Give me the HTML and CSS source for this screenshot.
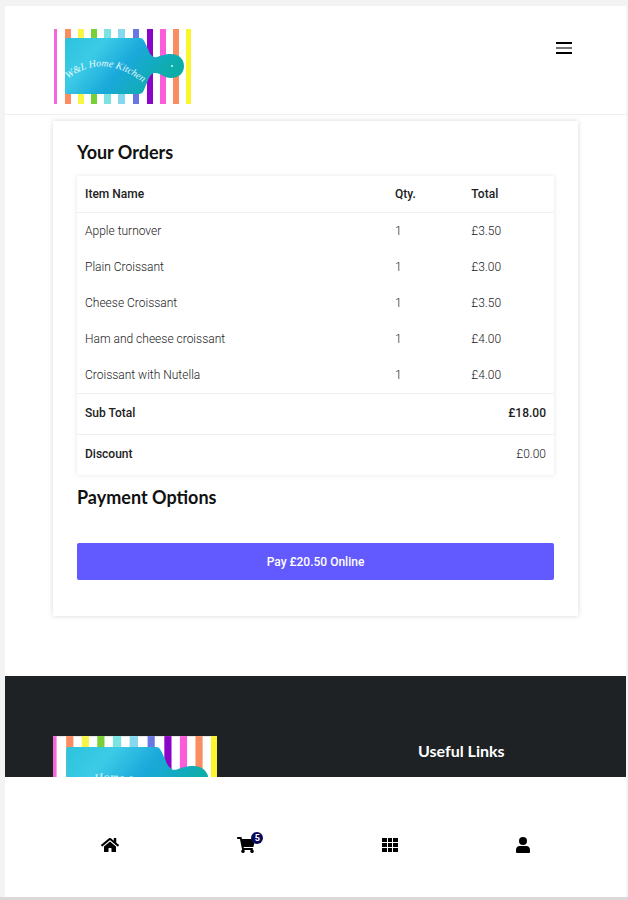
FILE: index.html
```html
<!DOCTYPE html>
<html lang="en">
<head>
    <meta charset="UTF-8">
    <meta name="viewport" content="width=device-width, initial-scale=1.0">
    <title>Your Orders</title>
    <link rel="stylesheet" href="styles.css">
</head>
<body>
    <!-- Shared logo artwork -->
    <svg class="sprite" aria-hidden="true">
        <defs>
            <linearGradient id="board-fill" x1="0" y1="0" x2="1" y2="0.4">
                <stop offset="0" stop-color="#2cc3dc"/>
                <stop offset="0.3" stop-color="#3ccbe6"/>
                <stop offset="0.6" stop-color="#1aa9da"/>
                <stop offset="1" stop-color="#0cada6"/>
            </linearGradient>
            <path id="logo-arc" d="M14 50 Q50 22 92 56"/>
        </defs>
        <symbol id="logo" viewBox="0 0 137 75">
            <rect width="137" height="75" fill="#fff"/>
            <rect x="0" width="3" height="75" fill="#f665dc"/>
            <rect x="11" width="6" height="75" fill="#f98c60"/>
            <rect x="24" width="6" height="75" fill="#f8f545"/>
            <rect x="37" width="6" height="75" fill="#79cf36"/>
            <rect x="50" width="7" height="75" fill="#7ce3e0"/>
            <rect x="64" width="7" height="75" fill="#85d8ee"/>
            <rect x="79" width="6" height="75" fill="#6877e4"/>
            <rect x="93" width="6" height="75" fill="#8a05c8"/>
            <rect x="106" width="6" height="75" fill="#fa5cda"/>
            <rect x="119" width="6" height="75" fill="#f98c60"/>
            <rect x="132" width="5" height="75" fill="#fbf52c"/>
            <path fill="url(#board-fill)" d="M13 9H86C90 9 91 14 94 20C96 26 99 29 103 28C107 27 110 25 117 25C125 25 130 30 130 37C130 44 125 49 117 49C110 49 107 44 101 44C96 44 95 50 92 56C90 61 89 65 85 65H13Q11 65 11 63V11Q11 9 13 9Z"/>
            <circle cx="118" cy="37" r="1" fill="#d9f7f4"/>
            <text class="logo-text"><textPath href="#logo-arc">W&amp;L Home Kitchen</textPath></text>
        </symbol>
    </svg>

    <div class="app">
        <header class="top-bar">
            <a href="#" class="brand" aria-label="Home">
                <svg class="logo"><use href="#logo"/></svg>
            </a>
            <button type="button" class="menu-button" aria-label="Menu">
                <svg width="16" height="12" viewBox="0 0 16 12">
                    <path d="M0 1H16M0 11H16" stroke="#000" stroke-width="2"/>
                    <path d="M0 6H16" stroke="#777" stroke-width="2"/>
                </svg>
            </button>
        </header>

        <div class="content">
            <main class="order-card">
                <h2>Your Orders</h2>
                <table class="order-table">
                    <thead>
                        <tr>
                            <th class="col-name">Item Name</th>
                            <th class="col-qty">Qty.</th>
                            <th class="col-total">Total</th>
                        </tr>
                    </thead>
                    <tbody>
                        <tr><td>Apple turnover</td><td>1</td><td>£3.50</td></tr>
                        <tr><td>Plain Croissant</td><td>1</td><td>£3.00</td></tr>
                        <tr><td>Cheese Croissant</td><td>1</td><td>£3.50</td></tr>
                        <tr><td>Ham and cheese croissant</td><td>1</td><td>£4.00</td></tr>
                        <tr><td>Croissant with Nutella</td><td>1</td><td>£4.00</td></tr>
                    </tbody>
                    <tfoot>
                        <tr><th>Sub Total</th><td colspan="2" class="amount strong">£18.00</td></tr>
                        <tr><th>Discount</th><td colspan="2" class="amount">£0.00</td></tr>
                    </tfoot>
                </table>
                <h2>Payment Options</h2>
                <button type="button" class="pay-button">Pay £20.50 Online</button>
            </main>

            <footer class="footer">
                <a href="#" class="footer-brand" aria-label="Home">
                    <svg class="logo logo-large"><use href="#logo"/></svg>
                </a>
                <h3>Useful Links</h3>
            </footer>
        </div>

        <nav class="bottom-nav">
            <a href="#" aria-label="Home">
                <svg width="18" height="16" viewBox="0 0 576 512"><path d="M280 148L96 300v164a16 16 0 0 0 16 16h112a16 16 0 0 0 16-16v-96a16 16 0 0 1 16-16h64a16 16 0 0 1 16 16v96a16 16 0 0 0 16 16h112a16 16 0 0 0 16-16V300L296 148a12 12 0 0 0-16 0zM571 251L488 183V44a12 12 0 0 0-12-12h-56a12 12 0 0 0-12 12v73L318 43a48 48 0 0 0-61 0L4 251a12 12 0 0 0-1 17l25 31a12 12 0 0 0 17 2L280 107a12 12 0 0 1 16 0l235 194a12 12 0 0 0 17-2l25-31a12 12 0 0 0-2-17z"/></svg>
            </a>
            <a href="#" class="cart" aria-label="Cart">
                <svg width="18" height="16" viewBox="0 0 576 512"><path d="M528 301l47-208a24 24 0 0 0-23-29H159l-9-45a24 24 0 0 0-24-19H24A24 24 0 0 0 0 24v16a24 24 0 0 0 24 24h70l70 343a56 56 0 1 0 67 9h210a56 56 0 1 0 64-10l5-25a24 24 0 0 0-23-29H218l-7-32h293a24 24 0 0 0 24-19z"/></svg>
                <span class="badge">5</span>
            </a>
            <a href="#" aria-label="Categories">
                <svg width="16" height="14" viewBox="0 0 16 14"><path d="M0 0h5v4H0zM6 0h4v4H6zM11 0h5v4h-5zM0 5h5v4H0zM6 5h4v4H6zM11 5h5v4h-5zM0 10h5v4H0zM6 10h4v4H6zM11 10h5v4h-5z"/></svg>
            </a>
            <a href="#" aria-label="Account">
                <svg width="14" height="16" viewBox="0 0 14 16"><circle cx="7" cy="4" r="4"/><path d="M4 9h6c3 0 4 2 4 4v2q0 1-1 1H1q-1 0-1-1v-2c0-2 1-4 4-4z"/></svg>
            </a>
        </nav>
    </div>
</body>
</html>
```

FILE: styles.css
```css
* {
    box-sizing: border-box;
}
body {
    margin: 0;
    font-family: Roboto, "Liberation Sans", sans-serif;
    font-size: 12px;
    line-height: 20px;
    color: #222;
    background-color: #f3f3f3;
}
h2, h3 {
    margin: 0;
    font-family: Lato, "Liberation Sans", sans-serif;
    font-weight: 700;
    color: #111;
}
h2 {
    font-size: 18px;
    line-height: 24px;
}
h3 {
    font-size: 16px;
    line-height: 20px;
    color: #fff;
}
.sprite {
    position: absolute;
    width: 0;
    height: 0;
}
.app {
    display: flex;
    flex-direction: column;
    height: 100vh;
    padding: 6px 2px 0 5px;
    border-bottom: 3px solid #d9d9d9;
}
.top-bar {
    display: flex;
    justify-content: space-between;
    align-items: flex-start;
    flex-shrink: 0;
    padding: 23px 49px 10px;
    background-color: #fff;
    border-bottom: 1px solid #f0f0f0;
}
.logo {
    display: block;
    width: 137px;
    height: 75px;
}
.logo-large {
    width: 164px;
    height: 90px;
}
.logo-text {
    font-family: "Liberation Serif", serif;
    font-size: 10px;
    font-style: italic;
    fill: #e4f8fc;
}
.menu-button {
    margin-top: 8px;
    padding: 5px;
    border: none;
    background: none;
    cursor: pointer;
}
.menu-button svg {
    display: block;
}
.content {
    flex: 1;
    min-height: 0;
    overflow-y: auto;
    scrollbar-width: none;
    background-color: #fff;
}
.order-card {
    margin: 6px 48px 60px;
    padding: 19px 24px 36px;
    background-color: #fff;
    box-shadow: 0 0 5px rgba(0, 0, 0, 0.16);
}
.order-table {
    width: 100%;
    margin: 12px 0 10px;
    border-collapse: collapse;
    table-layout: fixed;
    box-shadow: 0 0 5px rgba(0, 0, 0, 0.1);
}
.order-table th,
.order-table td {
    padding: 8px;
    text-align: left;
}
.order-table th {
    font-weight: 500;
}
.order-table td {
    font-weight: 300;
}
.order-table thead th {
    border-bottom: 1px solid #f0f0f0;
}
.order-table tfoot th,
.order-table tfoot td {
    padding: 9px 8px 11px;
    border-top: 1px solid #f0f0f0;
}
.col-name {
    width: 65%;
}
.col-qty {
    width: 16%;
}
.order-table .amount {
    text-align: right;
}
.order-table .strong {
    font-weight: 500;
}
.pay-button {
    display: block;
    width: 100%;
    margin-top: 34px;
    padding: 9px 8px 8px;
    border: none;
    border-radius: 2px;
    background-color: #6259ff;
    color: #fff;
    font: inherit;
    font-weight: 500;
    cursor: pointer;
}
.footer {
    display: grid;
    grid-template-columns: 365px 1fr;
    padding: 60px 48px;
    background-color: #1e2225;
}
.footer h3 {
    margin-top: 5px;
}
.bottom-nav {
    display: flex;
    justify-content: space-between;
    align-items: center;
    flex-shrink: 0;
    height: 120px;
    padding: 16px 96px 0;
    background-color: #fff;
}
.bottom-nav a {
    position: relative;
    color: #000;
}
.bottom-nav .cart {
    padding-right: 8px;
}
.bottom-nav svg {
    display: block;
    fill: #000;
}
.badge {
    position: absolute;
    top: -5px;
    right: 0;
    width: 12px;
    height: 12px;
    border-radius: 50%;
    background-color: #0b0a56;
    color: #fff;
    font-size: 9px;
    font-weight: 700;
    line-height: 12px;
    text-align: center;
}
```
